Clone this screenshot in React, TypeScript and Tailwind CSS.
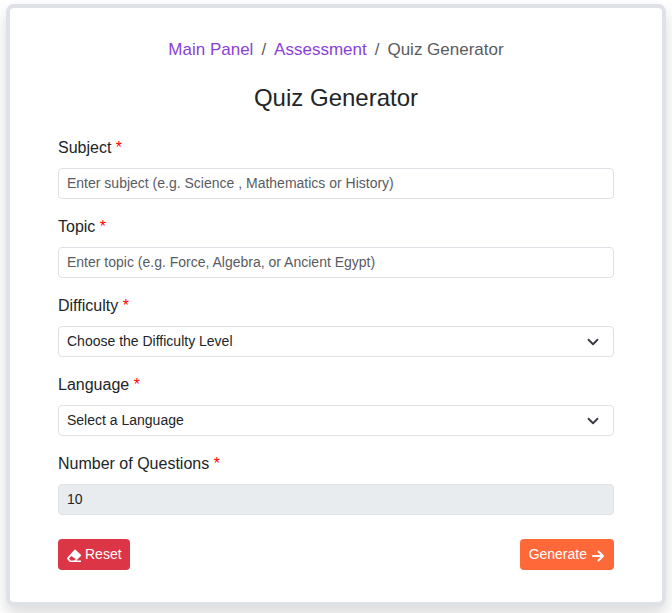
import React from "react";

const fieldClass =
  "block h-[31px] w-full rounded border border-[#dee2e6] px-2 text-[14px] leading-[21px] text-[#212529] placeholder:text-[#595c5f] outline-none focus:border-[#86b7fe]";

function Field({ id, label, children }: { id: string; label: string; children: React.ReactNode }) {
  return (
    <div className="mb-4">
      <label htmlFor={id} className="mb-2 block text-[16px] leading-6">
        {label} <span className="text-[#ff0000]">*</span>
      </label>
      {children}
    </div>
  );
}

function SelectBox({ id, placeholder, options }: { id: string; placeholder: string; options: string[] }) {
  return (
    <div className="relative">
      <select id={id} defaultValue="" className={`${fieldClass} appearance-none bg-white pr-9`}>
        <option value="">{placeholder}</option>
        {options.map((option) => (
          <option key={option}>{option}</option>
        ))}
      </select>
      <svg
        viewBox="0 0 16 16"
        className="pointer-events-none absolute top-[10px] right-[15px] size-3"
        fill="none"
        stroke="#343a40"
        strokeWidth="2.4"
        strokeLinecap="round"
        strokeLinejoin="round"
        aria-hidden="true"
      >
        <path d="m2 5 6 6 6-6" />
      </svg>
    </div>
  );
}

function EraserIcon() {
  return (
    <svg viewBox="0 0 14 14" className="mt-[3px] size-[14px]" fill="currentColor" aria-hidden="true">
      <path
        fillRule="evenodd"
        d="M7.2.9a1.2 1.2 0 0 1 1.7 0l4.700 4.700a1.2 1.2 0 0 1 0 1.700L9.300 11.600H14v1.500H3.600a1.500 1.500 0 0 1-1-.4L.5 10.300a1.300 1.300 0 0 1 0-1.800zM4.300 7 2.200 9.200a.4.4 0 0 0 0 .5l1.500 1.700a.7.7 0 0 0 .5.2h2.900l1.600-1.500z"
      />
    </svg>
  );
}

function ArrowIcon() {
  return (
    <svg
      viewBox="0 0 14 14"
      className="mt-[3px] size-[14px]"
      fill="none"
      stroke="currentColor"
      strokeWidth="2"
      strokeLinecap="round"
      strokeLinejoin="round"
      aria-hidden="true"
    >
      <path d="M2 7h10M7.500 2.500 12 7l-4.500 4.500" />
    </svg>
  );
}

export default function App() {
  return (
    <div className="px-[6px] pt-1 pb-[7px] font-['Liberation_Sans',Arial,sans-serif] text-[#212529]">
      <main className="rounded-lg border-4 border-[#dee2e6] bg-white px-12 pt-7 pb-8 shadow-[0_8px_16px_rgba(0,0,0,0.15)]">
        <nav aria-label="Breadcrumb" className="mb-5">
          <ol className="flex justify-center gap-2 text-[17px] leading-7 text-[#595c5f]">
            <li><a href="#panel" className="text-[#8a3fd8]">Main Panel</a></li>
            <li aria-hidden="true">/</li>
            <li><a href="#assessment" className="text-[#8a3fd8]">Assessment</a></li>
            <li aria-hidden="true">/</li>
            <li aria-current="page">Quiz Generator</li>
          </ol>
        </nav>
        <h1 className="mb-6 text-center text-[24px] leading-7">Quiz Generator</h1>
        <form onSubmit={(event) => event.preventDefault()}>
          <Field id="subject" label="Subject">
            <input id="subject" type="text" placeholder="Enter subject (e.g. Science , Mathematics or History)" className={`${fieldClass} pb-0.5`} />
          </Field>
          <Field id="topic" label="Topic">
            <input id="topic" type="text" placeholder="Enter topic (e.g. Force, Algebra, or Ancient Egypt)" className={`${fieldClass} pb-0.5`} />
          </Field>
          <Field id="difficulty" label="Difficulty">
            <SelectBox id="difficulty" placeholder="Choose the Difficulty Level" options={["Easy", "Medium", "Hard"]} />
          </Field>
          <Field id="language" label="Language">
            <SelectBox id="language" placeholder="Select a Language" options={["English", "Filipino"]} />
          </Field>
          <Field id="count" label="Number of Questions">
            <input id="count" type="text" readOnly value="10" className={`${fieldClass} bg-[#e9ecef] pb-0.5`} />
          </Field>
          <div className="mt-6 flex justify-between text-[14px] leading-[21px] text-white">
            <button type="reset" className="flex h-[31px] items-center gap-1 rounded bg-[#dc3545] pr-2 pl-[9px]">
              <EraserIcon />
              Reset
            </button>
            <button type="submit" className="flex h-[31px] items-center gap-1 rounded bg-[#ff6939] px-[9px]">
              Generate
              <ArrowIcon />
            </button>
          </div>
        </form>
      </main>
    </div>
  );
}
